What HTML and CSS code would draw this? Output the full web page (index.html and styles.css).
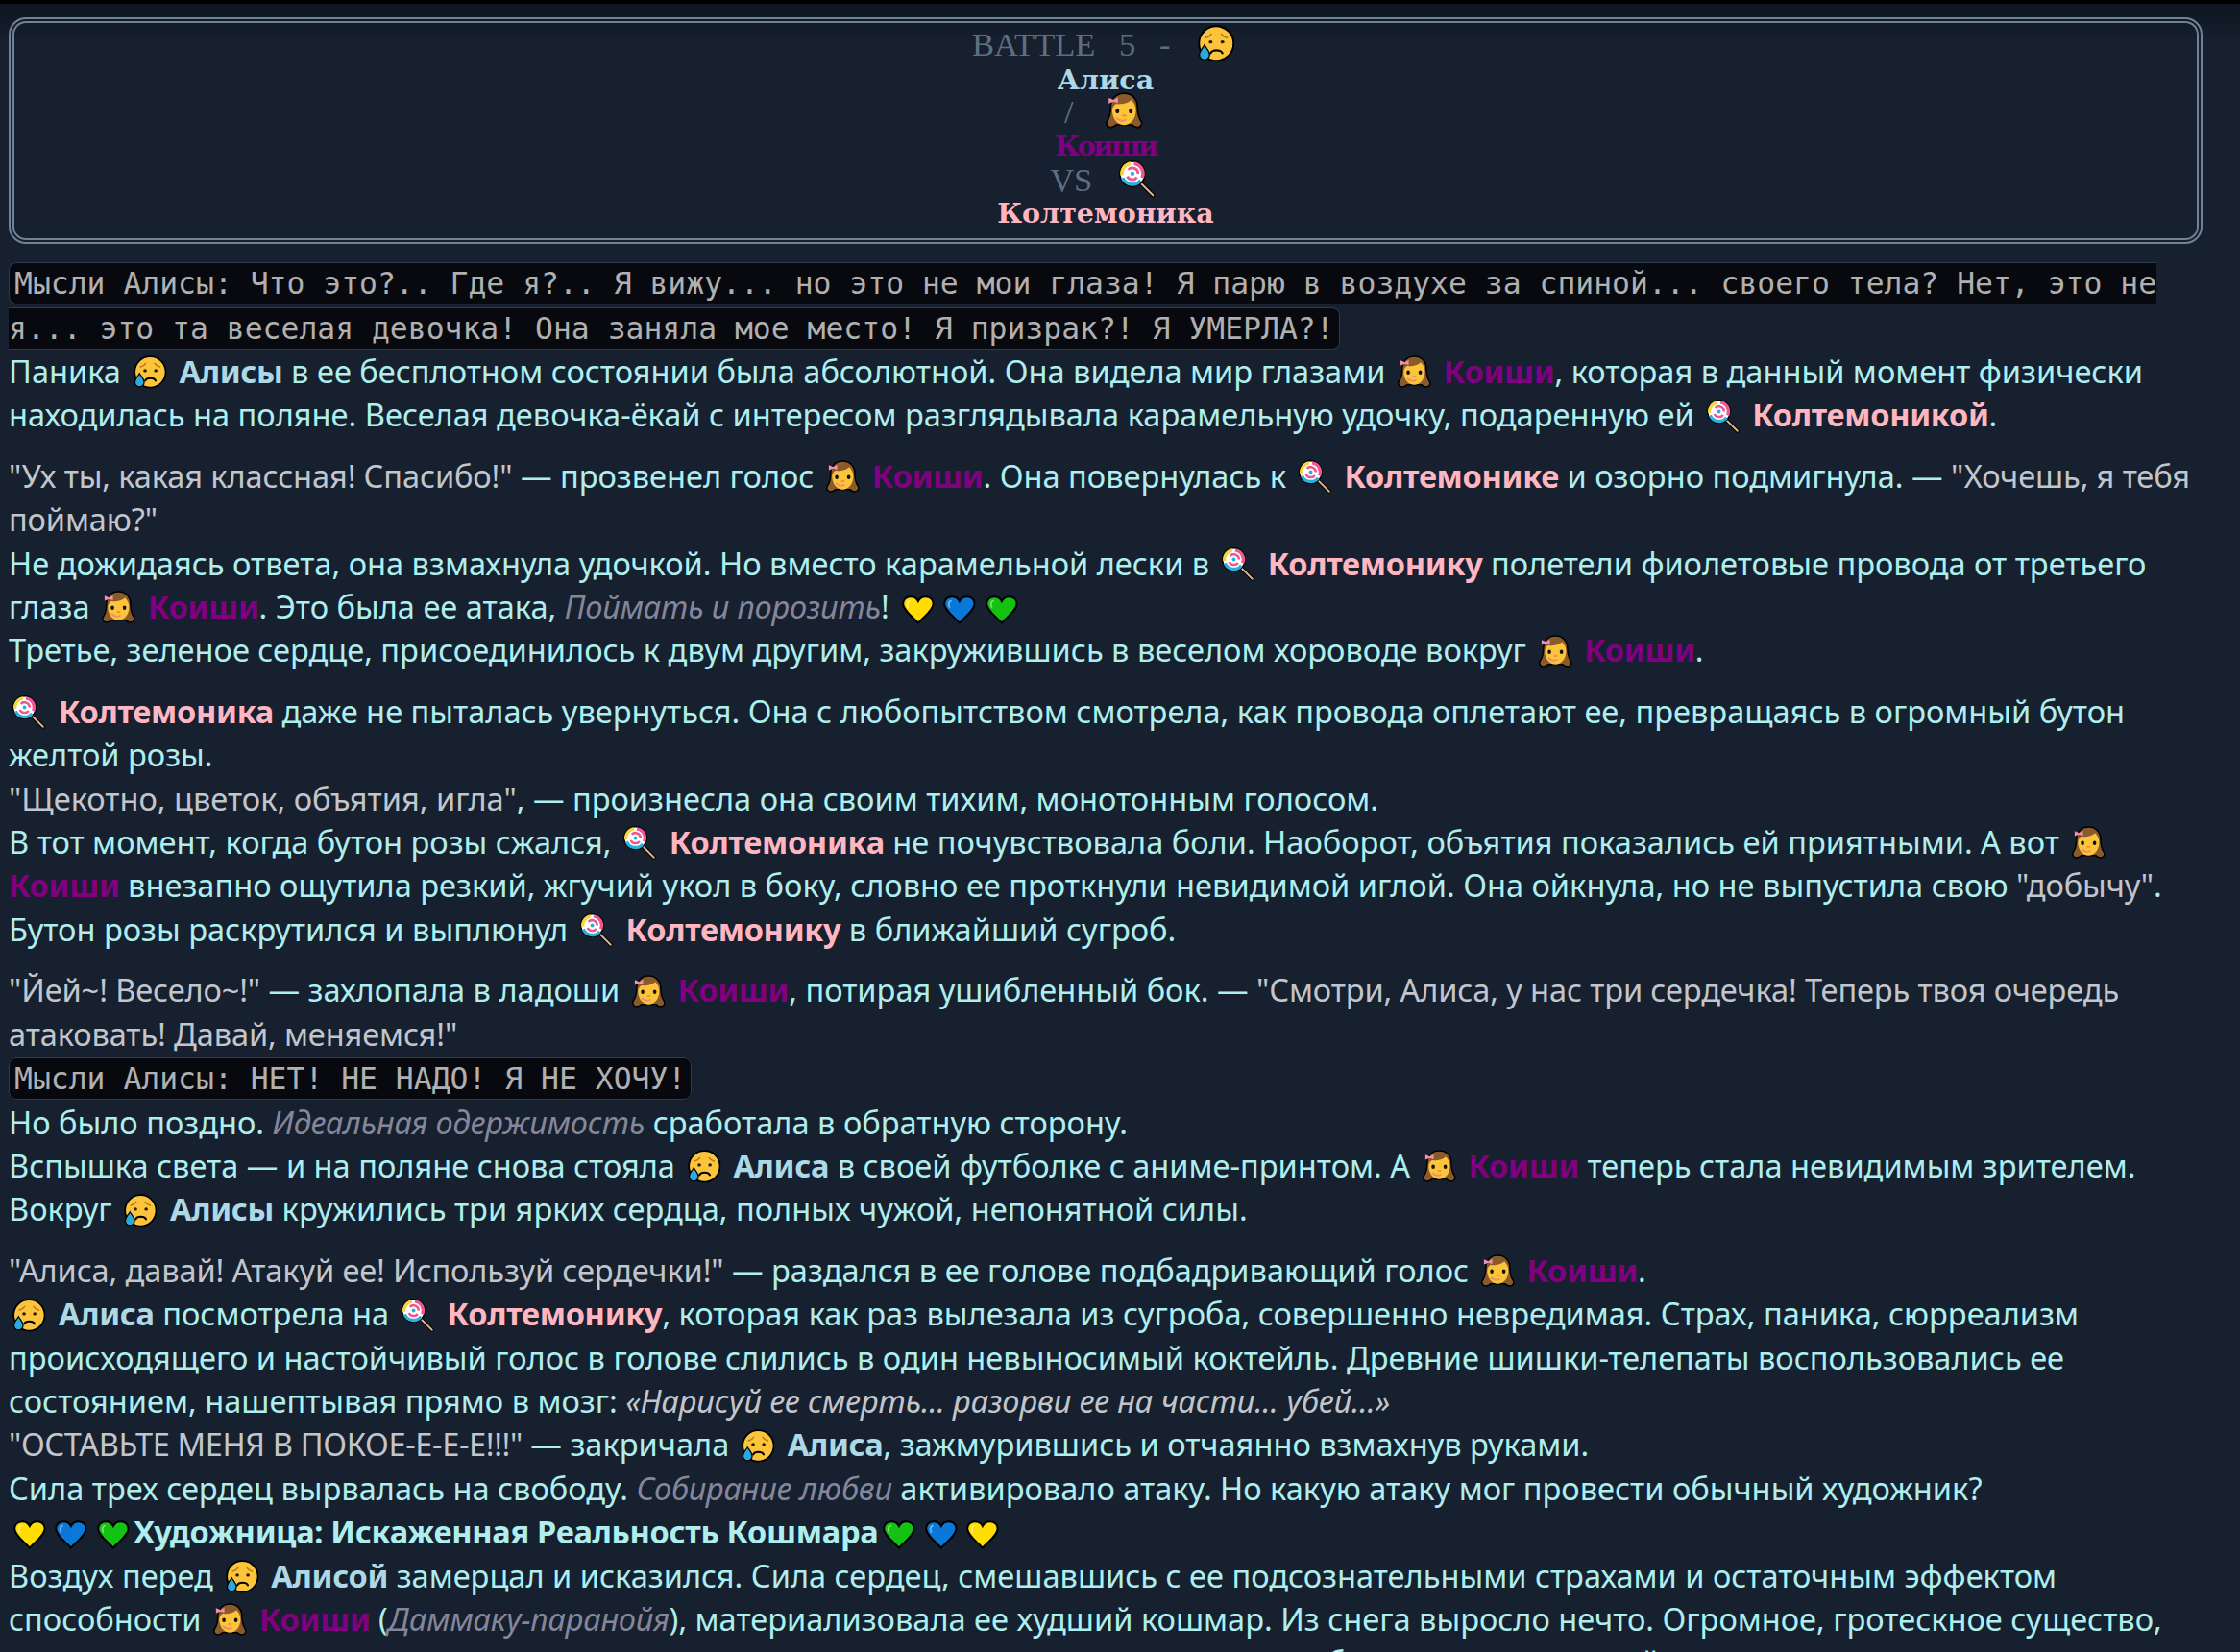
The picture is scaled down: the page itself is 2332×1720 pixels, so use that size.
FILE: index.html
```html
<!DOCTYPE html>
<html lang="ru">
<head>
<meta charset="utf-8">
<title>Battle 5</title>
<link rel="stylesheet" href="styles.css">
</head>
<body>
<svg class="sprite" width="0" height="0" aria-hidden="true">
  <defs>
    <symbol id="cry" viewBox="0 0 36 36">
      <circle cx="18" cy="18" r="16.8" fill="#fcc43a" stroke="#000" stroke-width="1.8"/>
      <path d="M7.500 12.500c2.200-.3 4.300-1.600 5.600-3.700M28.500 12.500c-2.200-.3-4.300-1.600-5.600-3.700" fill="none" stroke="#b5761a" stroke-width="1.500" stroke-linecap="round"/>
      <ellipse cx="12.500" cy="16.500" rx="1.900" ry="1.600" fill="#2a1a0a"/>
      <ellipse cx="24" cy="16.500" rx="1.900" ry="1.600" fill="#2a1a0a"/>
      <path d="M12.500 27.500c1.800-3.800 9.700-3.800 11.500 0" fill="none" stroke="#000" stroke-width="2" stroke-linecap="round"/>
      <path d="M6.500 19.500c-1.500 3-5 5.800-5 9.500a5 5 0 0 0 10 0c0-3.700-3.500-6.500-5-9.500z" fill="#2aa8e0" stroke="#000" stroke-width="1.300"/>
    </symbol>
    <symbol id="girl" viewBox="0 0 36 36">
      <path d="M18 1c-8 0-13 6-13 13 0 6-1 11-4 15-1 3 2 6 5 5 2 0 3-1 4-2h16c1 1 2 2 4 2 3 1 6-2 5-5-3-4-4-9-4-15 0-7-5-13-13-13z" fill="#8b5a2b" stroke="#000" stroke-width="1.600"/>
      <path d="M6.500 18c0-3 1.500-5 3.500-6.500 5 .5 12-.5 15-4 2.500 2.500 4.500 6 4.500 10.500 0 8-5.500 14-11.500 14S6.500 26 6.500 18z" fill="#fcc43a"/>
      <ellipse cx="11.500" cy="18.500" rx="1.900" ry="2.300" fill="#111"/>
      <ellipse cx="24.500" cy="18.500" rx="1.900" ry="2.300" fill="#111"/>
      <path d="M16.800 22.800h2.600" stroke="#e98a3a" stroke-width="1.500" stroke-linecap="round"/>
      <path d="M11 25.500c3 2.500 6 3 8.500 1.500" fill="none" stroke="#ef8f6a" stroke-width="2" stroke-linecap="round"/>
      <path d="M3 5.500l5 2 4-2.500v5.500l-4-1.500-5 2z" fill="#f48fb1"/>
    </symbol>
    <symbol id="lolly" viewBox="0 0 36 36">
      <path d="M20 21l13 13" stroke="#000" stroke-width="4.200" stroke-linecap="round"/>
      <path d="M20 21l13 13" stroke="#deb18a" stroke-width="2" stroke-linecap="round"/>
      <circle cx="13" cy="13" r="12.200" fill="#fff" stroke="#000" stroke-width="1.600"/>
      <g fill="none" stroke-linecap="butt">
        <path d="M2.900 14.500A10.200 10.200 0 0 1 11.500 2.900" stroke="#f7d53c" stroke-width="3.400"/>
        <path d="M14.500 2.900A10.200 10.200 0 0 1 22.500 17" stroke="#f0568f" stroke-width="3.400"/>
        <path d="M21 19.400A10.200 10.200 0 0 1 3.500 17" stroke="#2bb0dc" stroke-width="3.400"/>
        <path d="M18.500 13a5.500 5.500 0 0 0-9.500-3.800M8 15.500a5.500 5.500 0 0 0 9.500 1" stroke="#f0568f" stroke-width="2.600"/>
      </g>
      <circle cx="13" cy="13" r="2" fill="#2bb0dc"/>
    </symbol>
    <symbol id="heart" viewBox="0 0 34 30">
      <path d="M17 28.700C11 22 1.200 15.500 1.200 8.500 1.200 4 4.800 1.200 9 1.200c3.500 0 6.500 1.800 8 4.800 1.500-3 4.500-4.800 8-4.800 4.200 0 7.800 2.800 7.800 7.300C32.800 15.500 23 22 17 28.700z" fill="currentColor" stroke="#000" stroke-width="2"/>
      <path d="M8 5.500c-2.500 1-3 4-1.500 6.500" fill="none" stroke="#fff" stroke-opacity=".45" stroke-width="1.800" stroke-linecap="round"/>
    </symbol>
  </defs>
</svg>

<main class="page">
  <header class="battle">
    <div>BATTLE 5 - <svg class="emo"><use href="#cry"/></svg></div>
    <div class="al b">Алиса</div>
    <div><span class="sl">/</span> <svg class="emo"><use href="#girl"/></svg></div>
    <div class="ko b">Коиши</div>
    <div>VS <svg class="emo"><use href="#lolly"/></svg></div>
    <div class="kt b">Колтемоника</div>
  </header>

  <p><code>Мысли Алисы: Что это?.. Где я?.. Я вижу... но это не мои глаза! Я парю в воздухе за спиной... своего тела? Нет, это не я... это та веселая девочка! Она заняла мое место! Я призрак?! Я УМЕРЛА?!</code><br>
  Паника <svg class="emo"><use href="#cry"/></svg> <b class="al">Алисы</b> в ее бесплотном состоянии была абсолютной. Она видела мир глазами <svg class="emo"><use href="#girl"/></svg> <b class="ko">Коиши</b>, которая в данный момент физически находилась на поляне. Веселая девочка-ёкай с интересом разглядывала карамельную удочку, подаренную ей <svg class="emo"><use href="#lolly"/></svg> <b class="kt">Колтемоникой</b>.</p>

  <p><span class="q">"Ух ты, какая классная! Спасибо!"</span> — прозвенел голос <svg class="emo"><use href="#girl"/></svg> <b class="ko">Коиши</b>. Она повернулась к <svg class="emo"><use href="#lolly"/></svg> <b class="kt">Колтемонике</b> и озорно подмигнула. — <span class="q">"Хочешь, я тебя поймаю?"</span><br>
  Не дожидаясь ответа, она взмахнула удочкой. Но вместо карамельной лески в <svg class="emo"><use href="#lolly"/></svg> <b class="kt">Колтемонику</b> полетели фиолетовые провода от третьего глаза <svg class="emo"><use href="#girl"/></svg> <b class="ko">Коиши</b>. Это была ее атака, <i>Поймать и порозить</i>! <svg class="emo h y"><use href="#heart"/></svg><svg class="emo h c"><use href="#heart"/></svg><svg class="emo h g"><use href="#heart"/></svg><br>
  Третье, зеленое сердце, присоединилось к двум другим, закружившись в веселом хороводе вокруг <svg class="emo"><use href="#girl"/></svg> <b class="ko">Коиши</b>.</p>

  <p><svg class="emo"><use href="#lolly"/></svg> <b class="kt">Колтемоника</b> даже не пыталась увернуться. Она с любопытством смотрела, как провода оплетают ее, превращаясь в огромный бутон желтой розы.<br>
  <span class="q wide">"Щекотно, цветок, объятия, игла"</span>, — произнесла она своим тихим, монотонным голосом.<br>
  В тот момент, когда бутон розы сжался, <svg class="emo"><use href="#lolly"/></svg> <b class="kt">Колтемоника</b> не почувствовала боли. Наоборот, объятия показались ей приятными. А вот <svg class="emo"><use href="#girl"/></svg> <b class="ko">Коиши</b> внезапно ощутила резкий, жгучий укол в боку, словно ее проткнули невидимой иглой. Она ойкнула, но не выпустила свою <span class="q">"добычу"</span>.<br>
  Бутон розы раскрутился и выплюнул <svg class="emo"><use href="#lolly"/></svg> <b class="kt">Колтемонику</b> в ближайший сугроб.</p>

  <p><span class="q">"Йей~! Весело~!"</span> — захлопала в ладоши <svg class="emo"><use href="#girl"/></svg> <b class="ko">Коиши</b>, потирая ушибленный бок. — <span class="q">"Смотри, Алиса, у нас три сердечка! Теперь твоя очередь атаковать! Давай, меняемся!"</span><br>
  <code>Мысли Алисы: НЕТ! НЕ НАДО! Я НЕ ХОЧУ!</code><br>
  Но было поздно. <i>Идеальная одержимость</i> сработала в обратную сторону.<br>
  Вспышка света — и на поляне снова стояла <svg class="emo"><use href="#cry"/></svg> <b class="al">Алиса</b> в своей футболке с аниме-принтом. А <svg class="emo"><use href="#girl"/></svg> <b class="ko">Коиши</b> теперь стала невидимым зрителем.<br>
  Вокруг <svg class="emo"><use href="#cry"/></svg> <b class="al">Алисы</b> кружились три ярких сердца, полных чужой, непонятной силы.</p>

  <p><span class="q">"Алиса, давай! Атакуй ее! Используй сердечки!"</span> — раздался в ее голове подбадривающий голос <svg class="emo"><use href="#girl"/></svg> <b class="ko">Коиши</b>.<br>
  <svg class="emo"><use href="#cry"/></svg> <b class="al">Алиса</b> посмотрела на <svg class="emo"><use href="#lolly"/></svg> <b class="kt">Колтемонику</b>, которая как раз вылезала из сугроба, совершенно невредимая. Страх, паника, сюрреализм происходящего и настойчивый голос в голове слились в один невыносимый коктейль. Древние шишки-телепаты воспользовались ее состоянием, нашептывая прямо в мозг: <em class="q">«Нарисуй ее смерть... разорви ее на части... убей...»</em><br>
  <span class="q caps">"ОСТАВЬТЕ МЕНЯ В ПОКОЕ-Е-Е-Е!!!"</span> — закричала <svg class="emo"><use href="#cry"/></svg> <b class="al">Алиса</b>, зажмурившись и отчаянно взмахнув руками.<br>
  Сила трех сердец вырвалась на свободу. <i>Собирание любви</i> активировало атаку. Но какую атаку мог провести обычный художник?<br>
  <svg class="emo h y"><use href="#heart"/></svg><svg class="emo h c"><use href="#heart"/></svg><svg class="emo h g"><use href="#heart"/></svg><b>Художница: Искаженная Реальность Кошмара</b><svg class="emo h g"><use href="#heart"/></svg><svg class="emo h c"><use href="#heart"/></svg><svg class="emo h y"><use href="#heart"/></svg><br>
  Воздух перед <svg class="emo"><use href="#cry"/></svg> <b class="al">Алисой</b> замерцал и исказился. Сила сердец, смешавшись с ее подсознательными страхами и остаточным эффектом способности <svg class="emo"><use href="#girl"/></svg> <b class="ko">Коиши</b> (<i>Даммаку-паранойя</i>), материализовала ее худший кошмар. Из снега выросло нечто. Огромное, гротескное существо, напоминающее сразу всех, кто пугал ее в этом мире, медленно поднималось из сугроба, издавая странный скрип и шорох снега.</p>
</main>
</body>
</html>
```
FILE: styles.css
```css
html, body {
  margin: 0;
  height: 1720px;
  overflow: hidden;
}
body {
  background: linear-gradient(#000 0, #000 4px, #0f1520 4px, #16202f 44px, #16202f 100%);
  color: #afeeee;
  font-family: "Noto Sans", sans-serif;
  font-size: 32.6px;
  line-height: 45.4px;
}
.sprite { position: absolute; }
.page {
  box-sizing: border-box;
  width: 2332px;
  padding: 18px 39px 0 9px;
}
.battle {
  box-sizing: border-box;
  height: 236px;
  margin-bottom: 17px;
  padding: 5px 0;
  border: 6px double #6f8296;
  border-radius: 18px;
  text-align: center;
  font-family: "Liberation Serif", serif;
  font-size: 34.5px;
  line-height: 34.8px;
  word-spacing: 16px;
  color: #5f6f82;
}
.battle .b {
  font-family: "DejaVu Serif", serif;
  font-size: 28.5px;
  font-weight: 700;
  letter-spacing: 0;
}
.battle .al { position: relative; top: 1px; }
.battle .ko { letter-spacing: -2.5px; }
.battle .sl { letter-spacing: 5px; }
.battle .emo {
  width: 38.5px;
  height: 38.5px;
  margin: -10px 5px 0 3.5px;
  vertical-align: -6.5px;
}
p {
  margin: 0 0 18px;
}
b {
  font-weight: 700;
  letter-spacing: -.3px;
}
.al { color: #add8e6; }
.ko { color: #800080; }
.kt { color: #ffb6c1; }
i {
  color: #86869a;
  font-style: italic;
  letter-spacing: -.2px;
}
.q {
  color: #c2c6cc;
  letter-spacing: -.12px;
}
.q.wide { letter-spacing: 0; }
.q.caps { letter-spacing: -.37px; }
code {
  font-family: "DejaVu Sans Mono", monospace;
  font-size: 31.4px;
  line-height: 43.5px;
  color: #b0b0b0;
  background: #07090f;
  border: 1px solid #2d3c55;
  border-radius: 8px;
  padding: 3px 5px;
}
.emo {
  display: inline-block;
  width: 34.7px;
  height: 34.7px;
  margin: 0 4.4px;
  vertical-align: -6px;
  overflow: visible;
}
.h {
  width: 33.8px;
  height: 30px;
  margin: 0 4.8px;
}
.y { color: #ffdd00; }
.c { color: #0a78d8; }
.g { color: #14c214; }
```
